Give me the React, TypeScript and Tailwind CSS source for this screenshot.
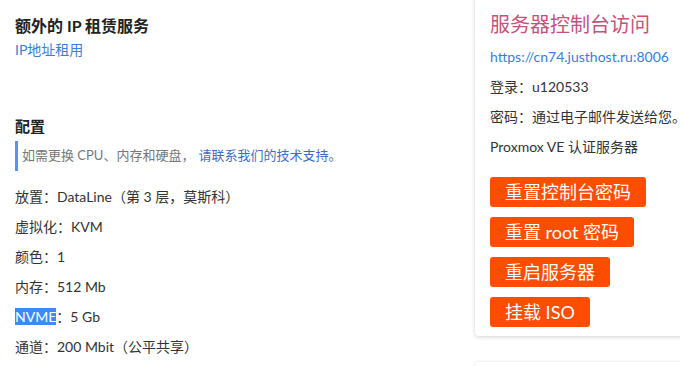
import React from 'react';

const font = "font-['Lato','Noto_Sans_CJK_SC',sans-serif]";

const specs: { label: string; value: React.ReactNode }[] = [
    { label: '放置', value: 'DataLine（第 3 层，莫斯科）' },
    { label: '虚拟化', value: 'KVM' },
    { label: '颜色', value: '1' },
    { label: '内存', value: '512 Mb' },
    { label: 'NVME', value: '5 Gb' },
    { label: '通道', value: '200 Mbit（公平共享）' },
];

const actions = ['重置控制台密码', '重置 root 密码', '重启服务器', '挂载 ISO'];

export default function App() {
    return (
        <div className={`w-[680px] h-[366px] overflow-hidden bg-white flex ${font} text-[#333]`}>
            {/* Left column */}
            <div className="w-[475px] shrink-0 pl-[15px] pt-[14px]">
                <h2 className="text-[16px] leading-[24px] font-bold text-[#222]">额外的 IP 租赁服务</h2>
                <a className="block mt-[2px] text-[14px] leading-[20px] text-[#3b7dd8]">IP地址租用</a>

                <h3 className="mt-[55px] text-[15px] leading-[22px] font-bold text-[#222]">配置</h3>
                <div className="mt-[4px] h-[30px] flex items-center border-l-[3px] border-[#5b8ff9] pl-[4px] text-[13px] text-[#777]">
                    如需更换 CPU、内存和硬盘，
                    <span className="ml-[4px] text-[#3b6fc4]">请联系我们的技术支持。</span>
                </div>

                <ul className="mt-[11px]">
                    {specs.map((s) => (
                        <li key={s.label} className="text-[14px] leading-[30px]">
                            {s.label === 'NVME' ? (
                                <span className="bg-[#3d8af7] text-white">NVME</span>
                            ) : (
                                s.label
                            )}
                            ：{s.value}
                        </li>
                    ))}
                </ul>
            </div>

            {/* Right column */}
            <div className="w-[230px] shrink-0 flex flex-col gap-[26px]">
                <div className="-mt-[6px] rounded-[4px] bg-white shadow-[0_1px_4px_rgba(0,0,0,0.18)] pl-[15px] pt-[15px] pb-[9px]">
                    <h3 className="text-[20px] leading-[30px] text-[#c5517c]">服务器控制台访问</h3>
                    <a className="block mt-[3px] text-[14px] leading-[30px] text-[#3b7dd8] whitespace-nowrap">https://cn74.justhost.ru:8006</a>
                    <p className="text-[14px] leading-[30px]">登录：u120533</p>
                    <p className="text-[14px] leading-[30px] whitespace-nowrap">密码：通过电子邮件发送给您。</p>
                    <p className="text-[14px] leading-[30px]">Proxmox VE 认证服务器</p>
                    <div className="mt-[15px] flex flex-col items-start gap-[10px]">
                        {actions.map((a) => (
                            <button
                                key={a}
                                className="h-[30px] px-[15px] rounded-[3px] bg-[#ff4d00] text-white text-[18px] leading-[30px]"
                            >
                                {a}
                            </button>
                        ))}
                    </div>
                </div>
                <div className="h-[40px] rounded-[4px] bg-white shadow-[0_1px_4px_rgba(0,0,0,0.18)]" />
            </div>
        </div>
    );
}
